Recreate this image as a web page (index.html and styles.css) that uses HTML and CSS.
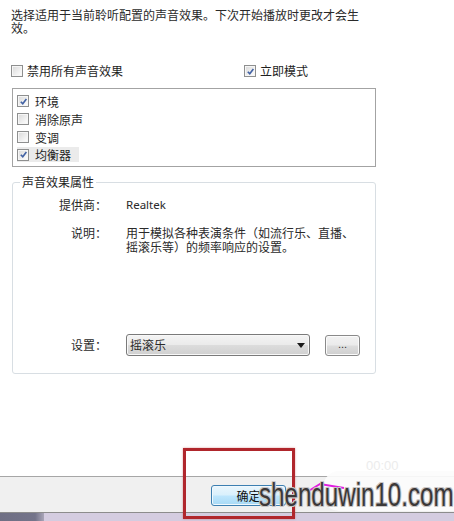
FILE: index.html
```html
<!DOCTYPE html>
<html lang="zh-CN">
<head>
<meta charset="utf-8">
<title>声音效果</title>
<link rel="stylesheet" href="styles.css">
</head>
<body>
<div class="dialog">
  <p class="desc">选择适用于当前聆听配置的声音效果。下次开始播放时更改才会生效。</p>

  <div class="toggles">
    <label class="opt opt-wide"><span class="cb"></span>禁用所有声音效果</label>
    <label class="opt"><span class="cb checked"><svg viewBox="0 0 10 10"><path d="M2 5.2 L4.2 7.6 L8.2 2.2" /></svg></span>立即模式</label>
  </div>

  <div class="listbox">
    <div class="item"><span class="cb checked"><svg viewBox="0 0 10 10"><path d="M2 5.2 L4.2 7.6 L8.2 2.2" /></svg></span>环境</div>
    <div class="item"><span class="cb"></span>消除原声</div>
    <div class="item"><span class="cb"></span>变调</div>
    <div class="item focused"><span class="cb checked"><svg viewBox="0 0 10 10"><path d="M2 5.2 L4.2 7.6 L8.2 2.2" /></svg></span>均衡器</div>
  </div>

  <fieldset class="group">
    <legend>声音效果属性</legend>
    <div class="props">
      <div class="prop-label">提供商：</div>
      <div class="prop-value latin">Realtek</div>
      <div class="prop-label row2">说明：</div>
      <div class="prop-value row2 wrap">用于模拟各种表演条件（如流行乐、直播、摇滚乐等）的频率响应的设置。</div>
      <div class="prop-label row3">设置：</div>
      <div class="prop-value row3 controls">
        <div class="select"><span>摇滚乐</span><svg class="arrow" viewBox="0 0 8 5"><path d="M0 0 H8 L4 5 Z"/></svg></div>
        <div class="more">...</div>
      </div>
    </div>
  </fieldset>

  <div class="footer">
    <div class="buttons">
      <div class="btn">确定</div>
    </div>
    <div class="strip"><span class="strip-dark"></span></div>
  </div>

  <div class="highlight-box"></div>
  <div class="wm-blob"></div>
  <div class="wm-ghost">00:00</div>
  <svg class="wm-streak" viewBox="0 0 40 14"><path d="M1 12 L14 4 L38 8" /></svg>
  <div class="watermark"><span>shenduwin10.com</span></div>
</div>
</body>
</html>
```

FILE: styles.css
```css
html, body {
  margin: 0;
  padding: 0;
  background: #ffffff;
}

.dialog {
  position: relative;
  width: 454px;
  height: 521px;
  overflow: hidden;
  display: flex;
  flex-direction: column;
  font-family: "Noto Sans CJK SC", "Noto Sans", sans-serif;
  font-size: 12px;
  color: #1e1e1e;
  background: #ffffff;
}

.desc {
  margin: 0;
  padding: 8px 0 0 11px;
  width: 364px;
  line-height: 13px;
  color: #2a2a2a;
}

.toggles {
  display: flex;
  margin-top: 30px;
  padding-left: 11px;
  height: 14px;
  line-height: 14px;
}

.opt {
  display: flex;
  align-items: center;
  gap: 4px;
}

.opt-wide {
  width: 233px;
}

.cb {
  box-sizing: border-box;
  width: 12px;
  height: 12px;
  border: 1px solid #8e8f8f;
  background: linear-gradient(135deg, #d8d8d8 0%, #f4f4f4 70%, #ffffff 100%);
  box-shadow: inset 0 0 0 1px #f6f6f6;
  display: inline-flex;
  align-items: center;
  justify-content: center;
  flex: none;
}

.cb svg {
  width: 9px;
  height: 9px;
}

.cb svg path {
  fill: none;
  stroke: #4262a4;
  stroke-width: 1.8;
}

.listbox {
  box-sizing: border-box;
  margin: 10px 0 0 12px;
  width: 364px;
  height: 79px;
  border: 1px solid #a3a3a3;
  padding: 3px 0 0 4px;
}

.item {
  height: 18px;
  display: flex;
  align-items: center;
}

.item .cb {
  margin-right: 6px;
}

.item.focused {
  width: max-content;
  height: 15px;
  margin-top: 1px;
  padding-right: 8px;
  background: #ebebeb;
}

.group {
  margin: 8px 0 0 12px;
  width: 364px;
  box-sizing: border-box;
  border: 1px solid #d8dee3;
  border-radius: 3px;
  padding: 0 0 17px 0;
  min-width: 0;
}

.group legend {
  margin-left: 7px;
  padding: 0 2px;
  line-height: 14px;
  color: #1e1e1e;
}

.props {
  display: grid;
  grid-template-columns: 94px 240px;
  column-gap: 19px;
  padding-top: 9px;
  line-height: 14px;
}

.prop-label {
  text-align: right;
  color: #2a2a2a;
}

.prop-value {
  color: #2a2a2a;
}

.wrap {
  width: 234px;
}

.latin {
  font-family: "Noto Sans", "Open Sans", sans-serif;
  font-size: 11.5px;
}

.row2 {
  margin-top: 14px;
}

.prop-label.row3 {
  align-self: center;
  padding-top: 80px;
}

.prop-value.row3 {
  margin-top: 80px;
}

.controls {
  display: flex;
  align-items: center;
  gap: 15px;
}

.select {
  box-sizing: border-box;
  width: 184px;
  height: 22px;
  border: 1px solid #7a7a7a;
  border-radius: 3px;
  background: linear-gradient(#f4f4f4 0%, #ebebeb 48%, #dcdcdc 52%, #d0d0d0 100%);
  display: flex;
  align-items: center;
  justify-content: space-between;
  padding: 0 4px 0 3px;
  box-shadow: inset 0 0 0 1px #f8f8f8;
  flex: none;
}

.select .arrow {
  width: 8px;
  height: 5px;
}

.select .arrow path {
  fill: #1a1a1a;
}

.more {
  box-sizing: border-box;
  width: 35px;
  height: 21px;
  border: 1px solid #8a8a8a;
  border-radius: 3px;
  background: linear-gradient(#f2f2f2 0%, #ebebeb 48%, #dddddd 52%, #cfcfcf 100%);
  box-shadow: inset 0 0 0 1px #fbfbfb;
  font-family: "Liberation Sans", sans-serif;
  font-size: 11px;
  line-height: 17px;
  text-align: center;
  color: #333;
  flex: none;
}

.footer {
  margin-top: auto;
}

.buttons {
  border-top: 1px solid #a6a6a6;
  background: #f0f0f0;
  padding: 8px 0 0 211px;
  box-sizing: border-box;
  height: 36px;
}

.btn {
  box-sizing: border-box;
  width: 75px;
  height: 21px;
  border: 1px solid #3c7fb1;
  border-radius: 3px;
  background: linear-gradient(#eaf6fd 0%, #d9f0fc 48%, #bee6fd 52%, #a7d9f5 100%);
  box-shadow: inset 0 0 0 1px #f0f8fd;
  text-align: center;
  line-height: 19px;
  color: #111;
}

.strip {
  height: 8px;
  border-top: 1px solid #8c8c8c;
  background: #d4cce0;
  display: flex;
}

.strip-dark {
  width: 44px;
  height: 100%;
  background: linear-gradient(90deg, #6f6f84 0%, #74748a 80%, #a9a5b8 100%);
}

.highlight-box {
  position: absolute;
  left: 183px;
  top: 448px;
  width: 112px;
  height: 71px;
  box-sizing: border-box;
  border: 3px solid #b0262c;
  box-shadow: 0 0 2px rgba(190, 60, 60, 0.5);
}

.wm-blob {
  position: absolute;
  left: 323px;
  top: 471px;
  width: 150px;
  height: 40px;
  border-radius: 16px;
  background: rgba(252, 252, 252, 0.92);
}

.wm-ghost {
  position: absolute;
  left: 366px;
  top: 458px;
  font-family: "Liberation Sans", sans-serif;
  font-size: 13px;
  color: #ececec;
}

.wm-streak {
  position: absolute;
  left: 306px;
  top: 480px;
  width: 40px;
  height: 14px;
}

.wm-streak path {
  fill: none;
  stroke: #e01ee0;
  stroke-width: 2;
}

.watermark {
  position: absolute;
  left: 259px;
  top: 474px;
  width: 192px;
  height: 40px;
}

.watermark span {
  display: inline-block;
  font-family: "Liberation Sans", sans-serif;
  font-size: 34px;
  line-height: 40px;
  color: #3b3838;
  transform: scaleX(0.71);
  transform-origin: 0 50%;
  white-space: nowrap;
  text-shadow:
    1px 0 0 #c9c6c6, -1px 0 0 #c9c6c6, 0 1px 0 #c9c6c6, 0 -1px 0 #c9c6c6,
    1px 1px 0 #c9c6c6, -1px -1px 0 #c9c6c6, 1px -1px 0 #c9c6c6, -1px 1px 0 #c9c6c6;
}
```
